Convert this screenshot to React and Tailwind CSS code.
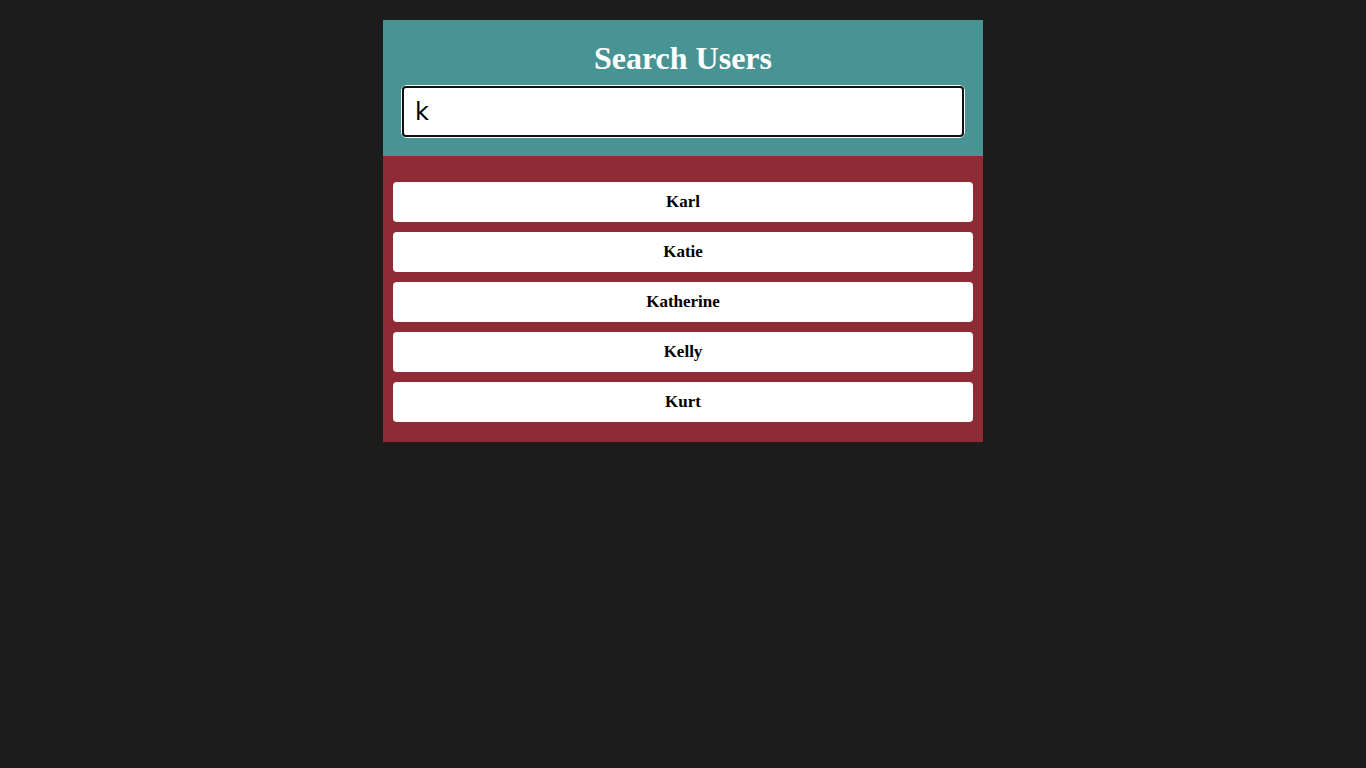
export default function App() {
  const users = ["Karl", "Katie", "Katherine", "Kelly", "Kurt"];
  return (
    <div className="min-h-screen w-full bg-[#1c1c1c] pt-5">
      <div className="mx-auto w-[600px]">
        <div className="bg-[#489494] px-[19px] pt-[20px] pb-[19px]">
          <h1 className="text-center text-[32px] font-bold leading-[37px] text-white [font-family:'Liberation_Serif',serif]">
            Search Users
          </h1>
          <div className="mt-[9px] rounded-[5px] shadow-[0_0_0_1px_#ffffff]">
            <div className="flex h-[51px] items-center rounded-[4px] border-2 border-[#101010] bg-white pl-[11px] text-[24px] text-black [font-family:'DejaVu_Sans',sans-serif]">
              k
            </div>
          </div>
        </div>
        <div className="flex flex-col gap-[10px] bg-[#8e2b35] px-[10px] pt-[26px] pb-[20px]">
          {users.map((u) => (
            <div
              key={u}
              className="flex h-[40px] items-center justify-center rounded-[4px] bg-white text-[17px] font-bold text-black [font-family:'Liberation_Serif',serif]"
            >
              {u}
            </div>
          ))}
        </div>
      </div>
    </div>
  );
}
